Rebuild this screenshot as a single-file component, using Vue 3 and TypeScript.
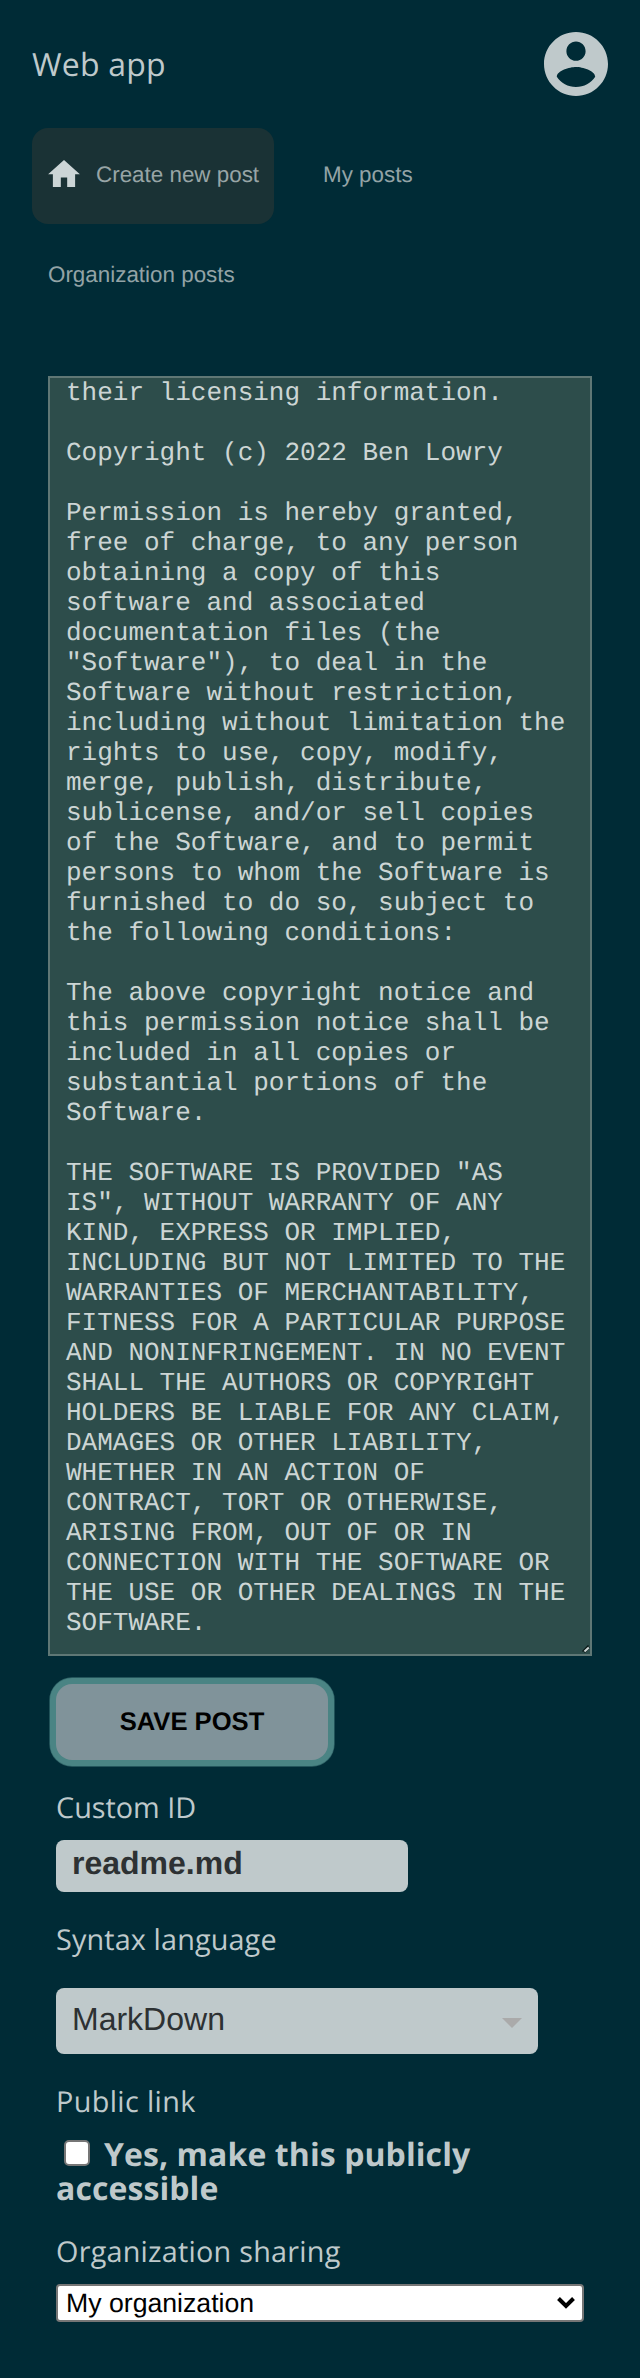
<script setup lang="ts">
import { ref } from 'vue'

const post = ref(`their licensing information.

Copyright (c) 2022 Ben Lowry

Permission is hereby granted,
free of charge, to any person
obtaining a copy of this
software and associated
documentation files (the
"Software"), to deal in the
Software without restriction,
including without limitation the
rights to use, copy, modify,
merge, publish, distribute,
sublicense, and/or sell copies
of the Software, and to permit
persons to whom the Software is
furnished to do so, subject to
the following conditions:

The above copyright notice and
this permission notice shall be
included in all copies or
substantial portions of the
Software.

THE SOFTWARE IS PROVIDED "AS
IS", WITHOUT WARRANTY OF ANY
KIND, EXPRESS OR IMPLIED,
INCLUDING BUT NOT LIMITED TO THE
WARRANTIES OF MERCHANTABILITY,
FITNESS FOR A PARTICULAR PURPOSE
AND NONINFRINGEMENT. IN NO EVENT
SHALL THE AUTHORS OR COPYRIGHT
HOLDERS BE LIABLE FOR ANY CLAIM,
DAMAGES OR OTHER LIABILITY,
WHETHER IN AN ACTION OF
CONTRACT, TORT OR OTHERWISE,
ARISING FROM, OUT OF OR IN
CONNECTION WITH THE SOFTWARE OR
THE USE OR OTHER DEALINGS IN THE
SOFTWARE.`)
const customId = ref('readme.md')
const language = ref('MarkDown')
const isPublic = ref(false)
const organization = ref('My organization')
</script>

<template>
  <div class="page">
    <header class="header">
      <h1 class="title">Web app</h1>
      <svg class="avatar" viewBox="2 2 20 20" aria-label="Account">
        <path
          d="M12 2C6.48 2 2 6.48 2 12s4.48 10 10 10 10-4.48 10-10S17.52 2 12 2zm0 3c1.66 0 3 1.34 3 3s-1.34 3-3 3-3-1.34-3-3 1.34-3 3-3zm0 14.2c-2.5 0-4.71-1.28-6-3.22.03-1.99 4-3.08 6-3.08 1.99 0 5.97 1.09 6 3.08-1.29 1.94-3.5 3.22-6 3.22z"
        />
      </svg>
    </header>

    <nav class="nav">
      <button class="tab active">
        <svg class="home" viewBox="2 3 20 17"><path d="M10 20v-6h4v6h5v-8h3L12 3 2 12h3v8z" /></svg>
        <span>Create new post</span>
      </button>
      <button class="tab">My posts</button>
      <button class="tab">Organization posts</button>
    </nav>

    <div class="editor">
      <textarea v-model="post" class="text" wrap="off" spellcheck="false"></textarea>
      <svg class="grip" viewBox="0 0 8 8">
        <path d="M0.5 6.5 6.5 0.5M2.5 7.5 7.5 2.5" class="grip-dark" />
        <path d="M2.5 6.5 6.8 2.5" class="grip-light" />
      </svg>
    </div>

    <form class="form" @submit.prevent>
      <button class="save">SAVE POST</button>

      <label class="label" for="custom-id">Custom ID</label>
      <input id="custom-id" v-model="customId" class="input" spellcheck="false" />

      <label class="label syntax" for="language">Syntax language</label>
      <div class="language">
        <select id="language" v-model="language" class="language-select">
          <option>MarkDown</option>
        </select>
        <span class="caret"></span>
      </div>

      <span class="label public">Public link</span>
      <label class="check">
        <input v-model="isPublic" type="checkbox" class="box" />Yes, make this publicly accessible
      </label>

      <label class="label sharing" for="organization">Organization sharing</label>
      <div class="organization">
        <select id="organization" v-model="organization" class="organization-select">
          <option>My organization</option>
        </select>
        <svg class="chevron" viewBox="0 0 20 14"><path d="M2.5 2.5 10 10 17.5 2.5" /></svg>
      </div>
    </form>
  </div>
</template>

<style>
body {
  margin: 0;
  background: #002b36;
}
</style>

<style scoped>
.page {
  box-sizing: border-box;
  width: 640px;
  height: 2378px;
  overflow: hidden;
  padding: 32px 32px 0;
  background: #002b36;
  color: #bfc9cb;
  font-family: 'Open Sans', 'Noto Sans', sans-serif;
  text-rendering: geometricPrecision;
}
button,
input,
textarea,
select {
  margin: 0;
  border: 0;
  font-family: 'Liberation Sans', Arial, sans-serif;
  text-rendering: geometricPrecision;
}
select {
  appearance: none;
  outline: 0;
}
.header {
  display: flex;
  align-items: center;
  justify-content: space-between;
  height: 64px;
}
.title {
  margin: 2px 0 0;
  font-size: 32px;
  font-weight: 400;
  line-height: 44px;
  letter-spacing: 0.2px;
}
.avatar {
  width: 64px;
  height: 64px;
  fill: #bfc9cb;
}
.nav {
  display: flex;
  flex-wrap: wrap;
  gap: 4px 33px;
  margin-top: 32px;
}
.tab {
  display: flex;
  align-items: center;
  gap: 16px;
  box-sizing: border-box;
  height: 96px;
  padding: 0 16px 3px;
  border-radius: 16px;
  background: transparent;
  color: #93a3a6;
  font-size: 22.4px;
  line-height: 26px;
}
.tab.active {
  width: 242px;
  padding-right: 0;
  background: #1a3235;
  color: #98a5a6;
  white-space: nowrap;
}
.home {
  flex: none;
  width: 32px;
  height: 27px;
  margin-bottom: 3px;
  fill: #ccd5d6;
}
.editor {
  position: relative;
  width: 544px;
  height: 1280px;
  margin: 52px 0 0 16px;
}
.text {
  display: block;
  box-sizing: border-box;
  width: 100%;
  height: 100%;
  padding: 0 16px;
  overflow: hidden;
  border: 2px solid #5f7775;
  border-radius: 0;
  outline: 0;
  resize: none;
  background: #2d4d4b;
  color: #ccd5d4;
  font: 26px/30px 'Liberation Mono', 'Courier New', monospace;
}
.grip {
  position: absolute;
  right: 2px;
  bottom: 3px;
  width: 8px;
  height: 8px;
  fill: none;
}
.grip-dark {
  stroke: #0c1817;
  stroke-width: 1.5;
}
.grip-light {
  stroke: #ccd5d4;
  stroke-width: 2;
}
.form {
  display: flex;
  flex-direction: column;
  align-items: flex-start;
  padding: 28px 24px 0;
}
.save {
  width: 272px;
  height: 76px;
  padding: 0;
  border-radius: 16px;
  background: #80939a;
  box-shadow: 0 0 0 6px #4a8484, 0 0 0 6.7px #2f6468;
  color: #000;
  font-size: 25.6px;
  font-weight: 700;
}
.label {
  height: 38px;
  margin-top: 29px;
  font-size: 28.8px;
  line-height: 38px;
}
.input {
  box-sizing: border-box;
  width: 352px;
  height: 52px;
  margin-top: 13px;
  padding: 0 16px 6px;
  border-radius: 8px;
  background: #bfc9cb;
  color: #2d3133;
  font-size: 32px;
  font-weight: 700;
}
.syntax {
  margin-top: 29px;
  letter-spacing: 0.13px;
}
.language {
  position: relative;
  width: 482px;
  height: 66px;
  margin-top: 29px;
}
.language-select {
  box-sizing: border-box;
  width: 100%;
  height: 100%;
  padding: 0 16px 4px;
  border-radius: 8px;
  background: #bfc9cb;
  color: #2d3133;
  font-size: 32px;
}
.caret {
  position: absolute;
  top: 30px;
  right: 16px;
  border: 10px solid transparent;
  border-top-color: #aaa;
  border-bottom: 0;
}
.public {
  margin-top: 29px;
  letter-spacing: 0.36px;
}
.check {
  width: 528px;
  margin-top: 17px;
  font-size: 32px;
  font-weight: 700;
  line-height: 34px;
  letter-spacing: 0.08px;
}
.box {
  appearance: none;
  box-sizing: border-box;
  width: 26px;
  height: 26px;
  margin: 0 14px 0 8px;
  border: 2px solid #767676;
  border-radius: 5px;
  background: #fff;
  vertical-align: 0;
}
.sharing {
  margin-top: 27px;
  letter-spacing: 0.23px;
}
.organization {
  position: relative;
  width: 528px;
  height: 38px;
  margin-top: 13px;
}
.organization-select {
  box-sizing: border-box;
  width: 100%;
  height: 100%;
  padding: 0 8px;
  border: 2px solid #767676;
  border-radius: 4px;
  background: #fff;
  color: #000;
  font-size: 26.67px;
}
.chevron {
  position: absolute;
  top: 12px;
  right: 8px;
  width: 20px;
  height: 14px;
  fill: none;
  stroke: #000;
  stroke-width: 4;
}
</style>
